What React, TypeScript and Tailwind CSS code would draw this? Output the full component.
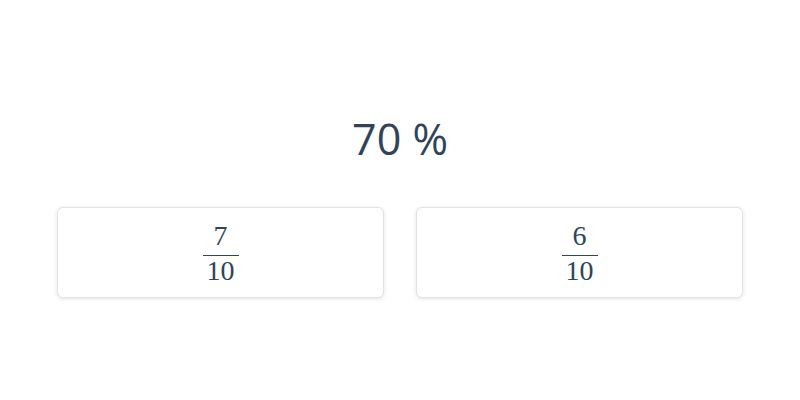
function Fraction({ num, den }: { num: string; den: string }) {
  return (
    <span className="inline-flex flex-col items-center text-[28px] leading-[27px] text-[#2f4459] font-['Liberation_Serif',serif]">
      <span className="px-1 pb-[6px]">{num}</span>
      <span className="h-px w-full bg-[#2f4459]" />
      <span className="px-1 pt-[1px]">{den}</span>
    </span>
  );
}

const answers = [
  { id: 'a', num: '7', den: '10' },
  { id: 'b', num: '6', den: '10' },
];

export default function App() {
  return (
    <div className="w-[800px] h-[400px] bg-white flex flex-col pt-[111px] font-['Open_Sans',sans-serif]">
      <h1 className="text-center text-[43px] leading-[56px] text-[#2f4459]">70 %</h1>

      <div className="grid grid-cols-2 gap-[32px] px-[57px] mt-[40px]">
        {answers.map((a) => (
          <button
            key={a.id}
            className="h-[91px] flex items-center justify-center bg-white border border-[#e3e3e3] rounded-md shadow-[0_1px_4px_rgba(0,0,0,0.12)]"
          >
            <Fraction num={a.num} den={a.den} />
          </button>
        ))}
      </div>
    </div>
  );
}
